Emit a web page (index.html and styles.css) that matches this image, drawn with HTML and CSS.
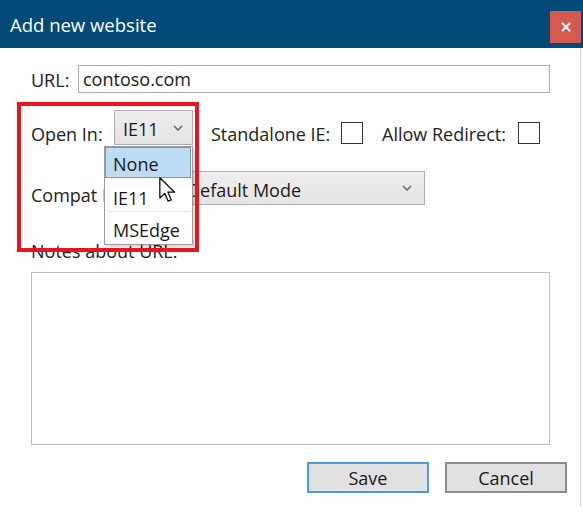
FILE: index.html
```html
<!DOCTYPE html>
<html lang="en">
<head>
<meta charset="utf-8">
<title>Add new website</title>
<link rel="stylesheet" href="styles.css">
</head>
<body>
<div class="window">
  <header class="titlebar">
    <span class="title">Add new website</span>
    <div class="close">
      <svg width="10" height="10" viewBox="0 0 10 10"><path d="M1 1 L9 9 M9 1 L1 9" stroke="#fff" stroke-width="2" fill="none"/></svg>
    </div>
  </header>
  <main class="content">
    <div class="row url-row">
      <span class="label url-label">URL:</span>
      <div class="textbox">contoso.com</div>
    </div>
    <div class="row open-row">
      <span class="label open-label">Open In:</span>
      <div class="combo combo-small">
        <span>IE11</span>
        <svg class="chev" width="10" height="6" viewBox="0 0 10 6"><polyline points="1,1 5,5 9,1" fill="none" stroke="#666" stroke-width="1.5"/></svg>
      </div>
      <span class="label standalone-label">Standalone IE:</span>
      <span class="check"></span>
      <span class="label redirect-label">Allow Redirect:</span>
      <span class="check"></span>
    </div>
    <div class="row compat-row">
      <span class="label compat-label">Compat Mode:</span>
      <div class="combo combo-wide">
        <span>Default Mode</span>
        <svg class="chev" width="10" height="6" viewBox="0 0 10 6"><polyline points="1,1 5,5 9,1" fill="none" stroke="#666" stroke-width="1.5"/></svg>
      </div>
    </div>
    <div class="label notes-label">Notes about URL:</div>
    <div class="textarea"></div>
    <div class="buttons">
      <div class="btn btn-default">Save</div>
      <div class="btn">Cancel</div>
    </div>
  </main>

  <ul class="dropdown">
    <li class="item item-selected">None</li>
    <li class="item item-mid">IE11</li>
    <li class="item item-last">MSEdge</li>
  </ul>

  <svg class="cursor" width="17" height="26" viewBox="0 0 13 20">
    <path d="M0.6 0.6 L0.6 16.2 L4.4 12.6 L7 18.6 L9.4 17.6 L6.9 11.7 L12 11.7 Z" fill="#fff" stroke="#111" stroke-width="1" stroke-linejoin="round"/>
  </svg>

  <div class="annotation"></div>
</div>
</body>
</html>
```

FILE: styles.css
```css
html, body {
  margin: 0;
  padding: 0;
  background: #ffffff;
}

body {
  font-family: "Open Sans", "Noto Sans", "DejaVu Sans", sans-serif;
}

.window {
  position: relative;
  width: 583px;
  height: 507px;
  background: #ffffff;
  overflow: hidden;
}

/* Title bar */
.titlebar {
  height: 48px;
  background: #024a78;
  display: flex;
  align-items: flex-start;
}

.title {
  color: #ffffff;
  font-size: 18.5px;
  line-height: 25px;
  margin: 12px 0 0 10px;
}

.close {
  margin: 11px 2px 0 auto;
  width: 31px;
  height: 32px;
  background: #d4594f;
  display: flex;
  align-items: center;
  justify-content: center;
}

/* Content */
.content {
  box-sizing: border-box;
  height: 459px;
  margin-right: 2px;
  border-right: 1px solid #d6d6d6;
  padding: 17px 0 0 31px;
  display: flex;
  flex-direction: column;
  font-size: 18px;
  color: #222222;
}

.row {
  display: flex;
}

.label {
  line-height: 22px;
  white-space: nowrap;
  color: #222222;
}

/* URL row */
.url-row {
  height: 28px;
  align-items: center;
}

.url-label {
  width: 47px;
  padding-top: 2px;
}

.textbox {
  box-sizing: border-box;
  width: 472px;
  height: 28px;
  border: 1px solid #acacac;
  padding: 2px 0 0 4px;
  line-height: 22px;
  color: #1a1a1a;
}

/* Open In row */
.open-row {
  margin-top: 17px;
  height: 35px;
  align-items: flex-end;
}

.open-label {
  width: 83px;
}

.combo {
  box-sizing: border-box;
  display: flex;
  align-items: center;
  justify-content: space-between;
  background: linear-gradient(#eeeeee, #e4e4e4);
  border: 1px solid #adadad;
  padding-top: 3px;
  color: #1a1a1a;
  align-self: stretch;
}

.combo span {
  line-height: 22px;
}

.chev {
  margin-top: -3px;
}

.combo-small {
  width: 79px;
  padding-left: 8px;
  padding-right: 9px;
}

.standalone-label {
  margin-left: 18px;
  width: 130px;
}

.redirect-label {
  margin-left: 19px;
  width: 136px;
}

.check {
  box-sizing: border-box;
  width: 22px;
  height: 22px;
  border: 1px solid #333333;
  background: #ffffff;
  margin-bottom: 1px;
}

/* Compat row */
.compat-row {
  margin-top: 26px;
  height: 34px;
  align-items: flex-end;
}

.compat-label {
  width: 145px;
  margin-bottom: -1px;
}

.combo-wide {
  width: 249px;
  padding-left: 10px;
  padding-right: 12px;
}

/* Notes */
.notes-label {
  margin-top: 35px;
}

.textarea {
  box-sizing: border-box;
  margin-top: 10px;
  width: 519px;
  height: 173px;
  border: 1px solid #bcbcbc;
  background: #ffffff;
}

/* Buttons */
.buttons {
  margin-top: 17px;
  margin-right: 13px;
  display: flex;
  justify-content: flex-end;
  gap: 16px;
}

.btn {
  box-sizing: border-box;
  width: 122px;
  height: 31px;
  background: #e1e1e1;
  border: 2px solid #8c8c8c;
  display: flex;
  align-items: center;
  justify-content: center;
  line-height: 22px;
  color: #1a1a1a;
}

.btn-default {
  border-color: #4a9be0;
}

/* Dropdown popup (overlays the form) */
.dropdown {
  position: absolute;
  left: 104px;
  top: 146px;
  box-sizing: border-box;
  width: 89px;
  height: 99px;
  margin: 0;
  padding: 0;
  list-style: none;
  background: #ffffff;
  border: 1px solid #9c9c9c;
  box-shadow: 2px 2px 3px rgba(0, 0, 0, 0.18);
  font-size: 18px;
  color: #1a1a1a;
  display: flex;
  flex-direction: column;
}

.item {
  box-sizing: border-box;
  padding-left: 8px;
  line-height: 22px;
  display: flex;
  align-items: center;
}

.item-selected {
  height: 31px;
  background: #bddcf4;
  border: 1px solid #5b9fd6;
  padding-left: 7px;
  padding-top: 3px;
  margin-right: 1px;
}

.item-mid {
  height: 34px;
  padding-top: 6px;
  border-bottom: 1px solid #e6e6e6;
  margin: 0 2px;
  padding-left: 6px;
}

.item-last {
  height: 32px;
  padding-top: 4px;
}

.cursor {
  position: absolute;
  left: 159px;
  top: 177px;
}

/* Red annotation rectangle */
.annotation {
  position: absolute;
  left: 17px;
  top: 102px;
  box-sizing: border-box;
  width: 182px;
  height: 150px;
  border: 4px solid #e8141f;
  pointer-events: none;
}
```
